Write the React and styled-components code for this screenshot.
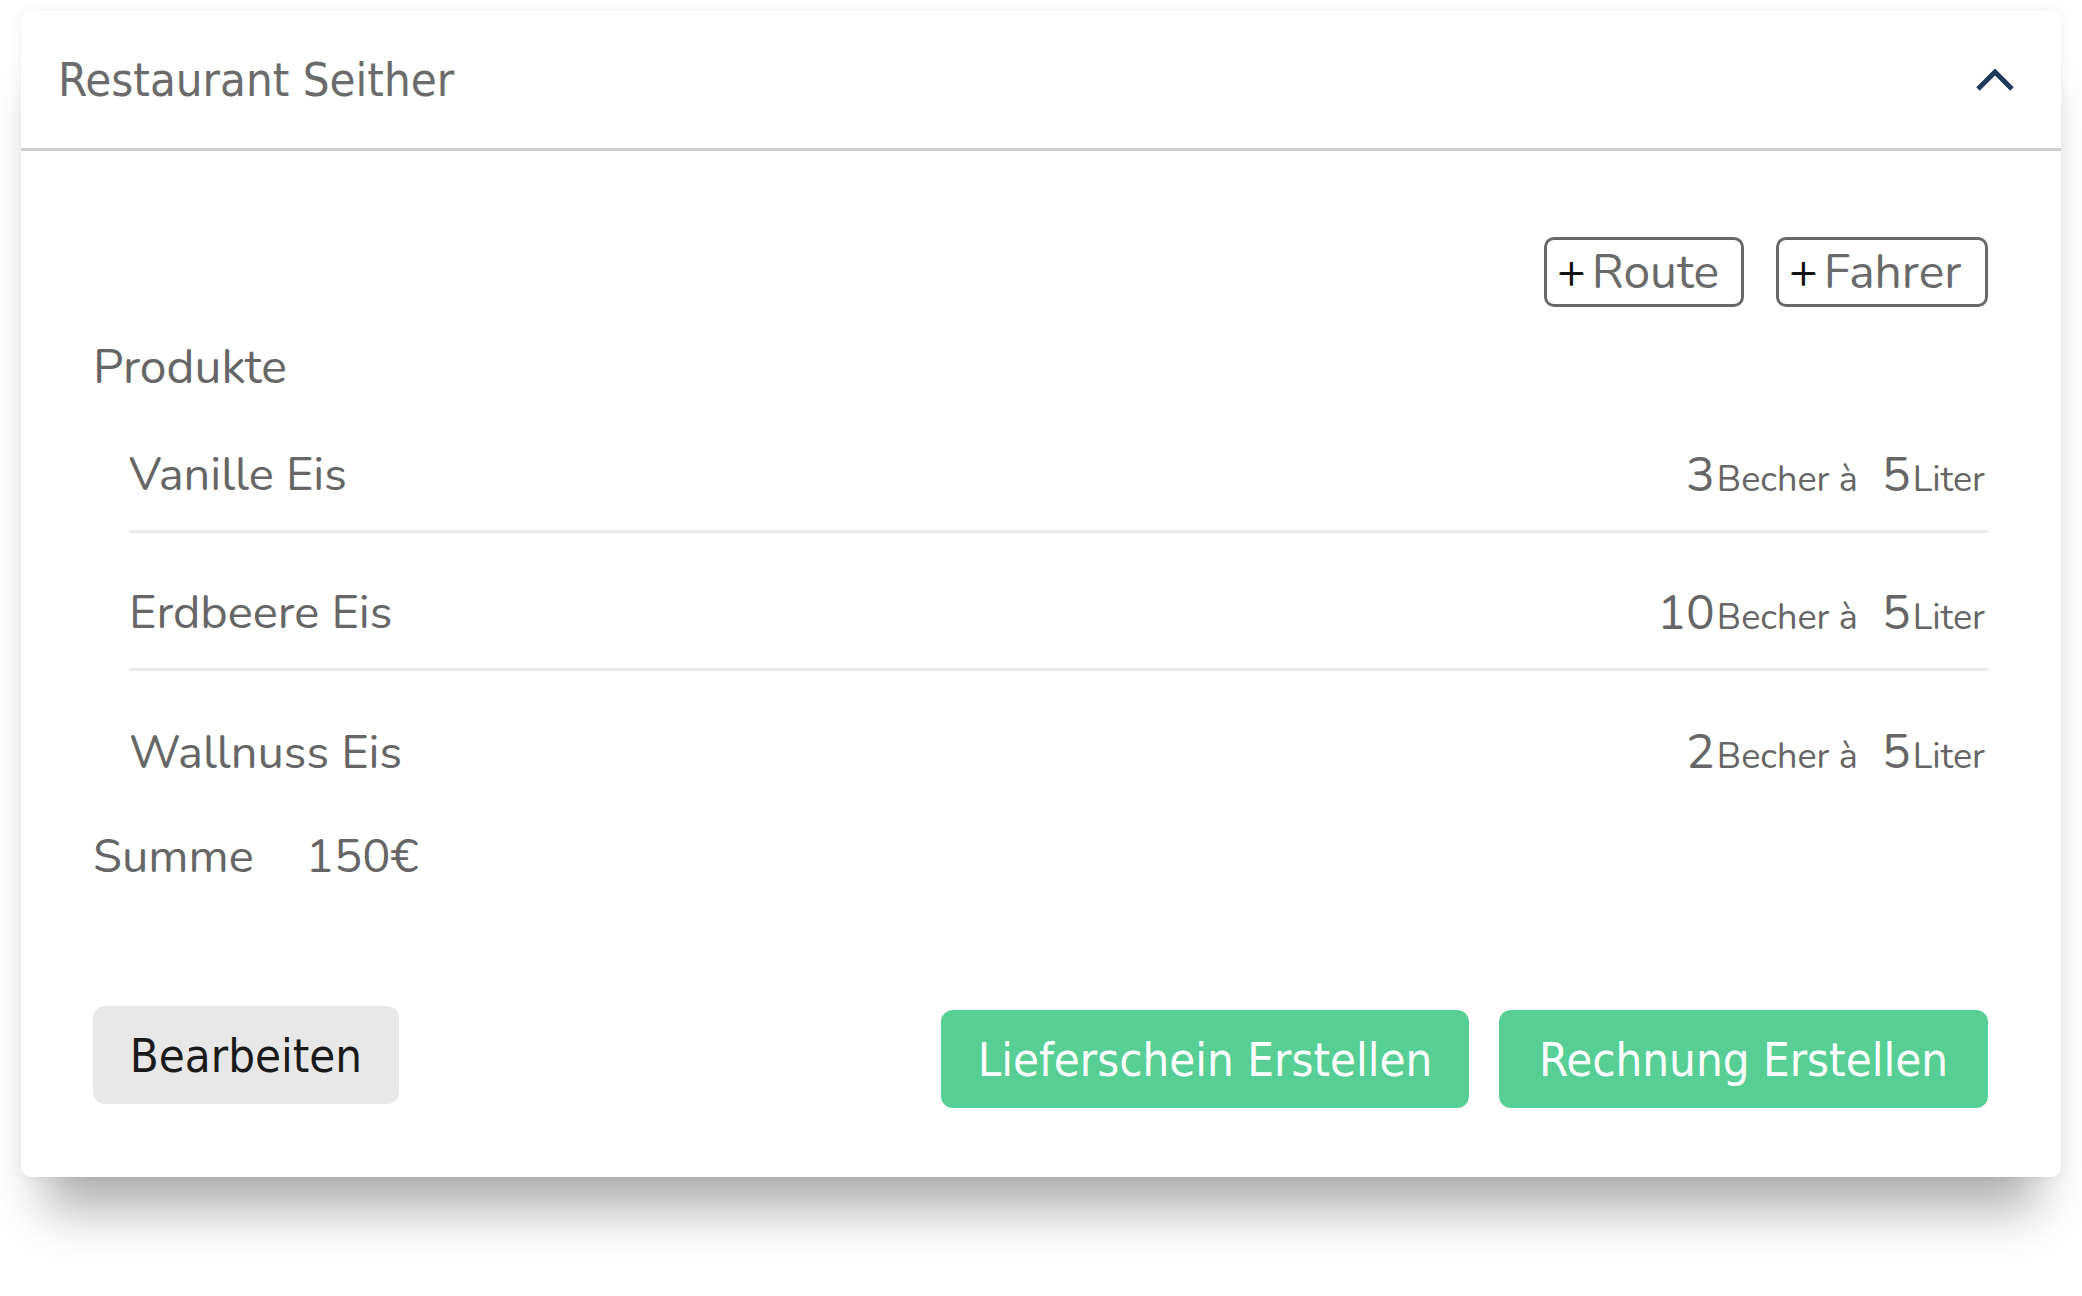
import React from "react";
import styled, { createGlobalStyle } from "styled-components";

const GlobalStyle = createGlobalStyle`
  html, body {
    margin: 0;
    padding: 0;
    background: #ffffff;
  }
  * { box-sizing: border-box; }
`;

const BODY_FONT = `"Nunito", "Lato", "Open Sans", sans-serif`;
const NARROW_FONT = `"DejaVu Sans Condensed", "DejaVu Sans", sans-serif`;

const Page = styled.div`
  width: 2082px;
  min-height: 1296px;
  padding: 11px 21px 0 21px;
  background: #ffffff;
`;

const Card = styled.section`
  width: 2040px;
  background: #ffffff;
  border-radius: 10px;
  box-shadow: 0 56px 48px -24px rgba(0, 0, 0, 0.32), 0 0 14px rgba(0, 0, 0, 0.06);
`;

const Header = styled.header`
  height: 140px;
  display: flex;
  align-items: center;
  justify-content: space-between;
  padding: 0 46px 0 37px;
  border-bottom: 3px solid #cdcdcd;
`;

const Title = styled.h2`
  margin: 0;
  font-family: ${NARROW_FONT};
  font-stretch: condensed;
  font-weight: 400;
  font-size: 47px;
  color: #6b6b6b;
`;

const Toggle = styled.button`
  border: 0;
  background: transparent;
  padding: 0;
  width: 40px;
  height: 26px;
  display: flex;
  align-items: center;
  justify-content: center;
  cursor: pointer;
`;

const Body = styled.div`
  padding: 86px 73px 69px 72px;
  font-family: ${BODY_FONT};
  color: #666666;
`;

const Toolbar = styled.div`
  display: flex;
  justify-content: flex-end;
  gap: 32px;
`;

const OutlineButton = styled.button`
  height: 70px;
  width: ${(p) => p.$w}px;
  border: 3px solid #696969;
  border-radius: 10px;
  background: #ffffff;
  font-family: ${BODY_FONT};
  font-size: 48px;
  color: #6a6a6a;
  display: flex;
  align-items: center;
  padding: 0 0 0 10px;
  line-height: 1;
  cursor: pointer;
`;

const Plus = styled.span`
  color: #111111;
  margin-right: 6px;
`;

const SectionLabel = styled.div`
  font-size: 48px;
  line-height: 60px;
  margin-top: 30px;
`;

const ProductList = styled.div`
  padding-left: 36px;
  margin-top: -2px;
`;

const Row = styled.div`
  height: 138px;
  padding-top: 24px;
  display: flex;
  align-items: center;
  justify-content: space-between;
  border-bottom: ${(p) => (p.$last ? "0" : "3px solid #ebebeb")};
`;

const ProductName = styled.span`
  font-size: 47px;
`;

const Quantity = styled.span`
  display: flex;
  align-items: baseline;
  padding-right: 3px;
`;

const Num = styled.span`
  font-size: 48px;
  margin-left: ${(p) => p.$gap || 0}px;
`;

const Unit = styled.span`
  font-size: 36px;
  margin-left: 2px;
`;

const SumRow = styled.div`
  display: flex;
  gap: 52px;
  font-size: 47px;
  line-height: 60px;
  margin-top: 18px;
`;

const Actions = styled.div`
  display: flex;
  align-items: flex-start;
  margin-top: 119px;
`;

const GreyButton = styled.button`
  height: 98px;
  width: 306px;
  border: 0;
  border-radius: 12px;
  background: #e8e8e8;
  color: #1a1a1a;
  font-family: ${NARROW_FONT};
  font-stretch: condensed;
  font-size: 47px;
  white-space: nowrap;
  cursor: pointer;
`;

const Spacer = styled.div`
  flex: 1;
`;

const GreenButton = styled.button`
  height: 98px;
  width: ${(p) => p.$w}px;
  margin-top: 4px;
  margin-left: ${(p) => p.$ml || 0}px;
  border: 0;
  border-radius: 12px;
  background: #57cf94;
  color: #ffffff;
  font-family: ${NARROW_FONT};
  font-stretch: condensed;
  font-size: 47px;
  white-space: nowrap;
  cursor: pointer;
`;

const products = [
  { name: "Vanille Eis", count: 3 },
  { name: "Erdbeere Eis", count: 10 },
  { name: "Wallnuss Eis", count: 2 },
];

export default function App() {
  return (
    <>
      <GlobalStyle />
      <Page>
        <Card>
          <Header>
            <Title>Restaurant Seither</Title>
            <Toggle aria-label="Einklappen">
              <svg width="40" height="26" viewBox="0 0 40 26">
                <polyline
                  points="3,22 20,5 37,22"
                  fill="none"
                  stroke="#1f3b5c"
                  strokeWidth="5"
                />
              </svg>
            </Toggle>
          </Header>
          <Body>
            <Toolbar>
              <OutlineButton $w={200}>
                <Plus>+</Plus>Route
              </OutlineButton>
              <OutlineButton $w={212}>
                <Plus>+</Plus>Fahrer
              </OutlineButton>
            </Toolbar>
            <SectionLabel>Produkte</SectionLabel>
            <ProductList>
              {products.map((p, i) => (
                <Row key={p.name} $last={i === products.length - 1}>
                  <ProductName>{p.name}</ProductName>
                  <Quantity>
                    <Num>{p.count}</Num>
                    <Unit>Becher à</Unit>
                    <Num $gap={24}>5</Num>
                    <Unit>Liter</Unit>
                  </Quantity>
                </Row>
              ))}
            </ProductList>
            <SumRow>
              <span>Summe</span>
              <span>150€</span>
            </SumRow>
            <Actions>
              <GreyButton>Bearbeiten</GreyButton>
              <Spacer />
              <GreenButton $w={528}>Lieferschein Erstellen</GreenButton>
              <GreenButton $w={489} $ml={30}>
                Rechnung Erstellen
              </GreenButton>
            </Actions>
          </Body>
        </Card>
      </Page>
    </>
  );
}
